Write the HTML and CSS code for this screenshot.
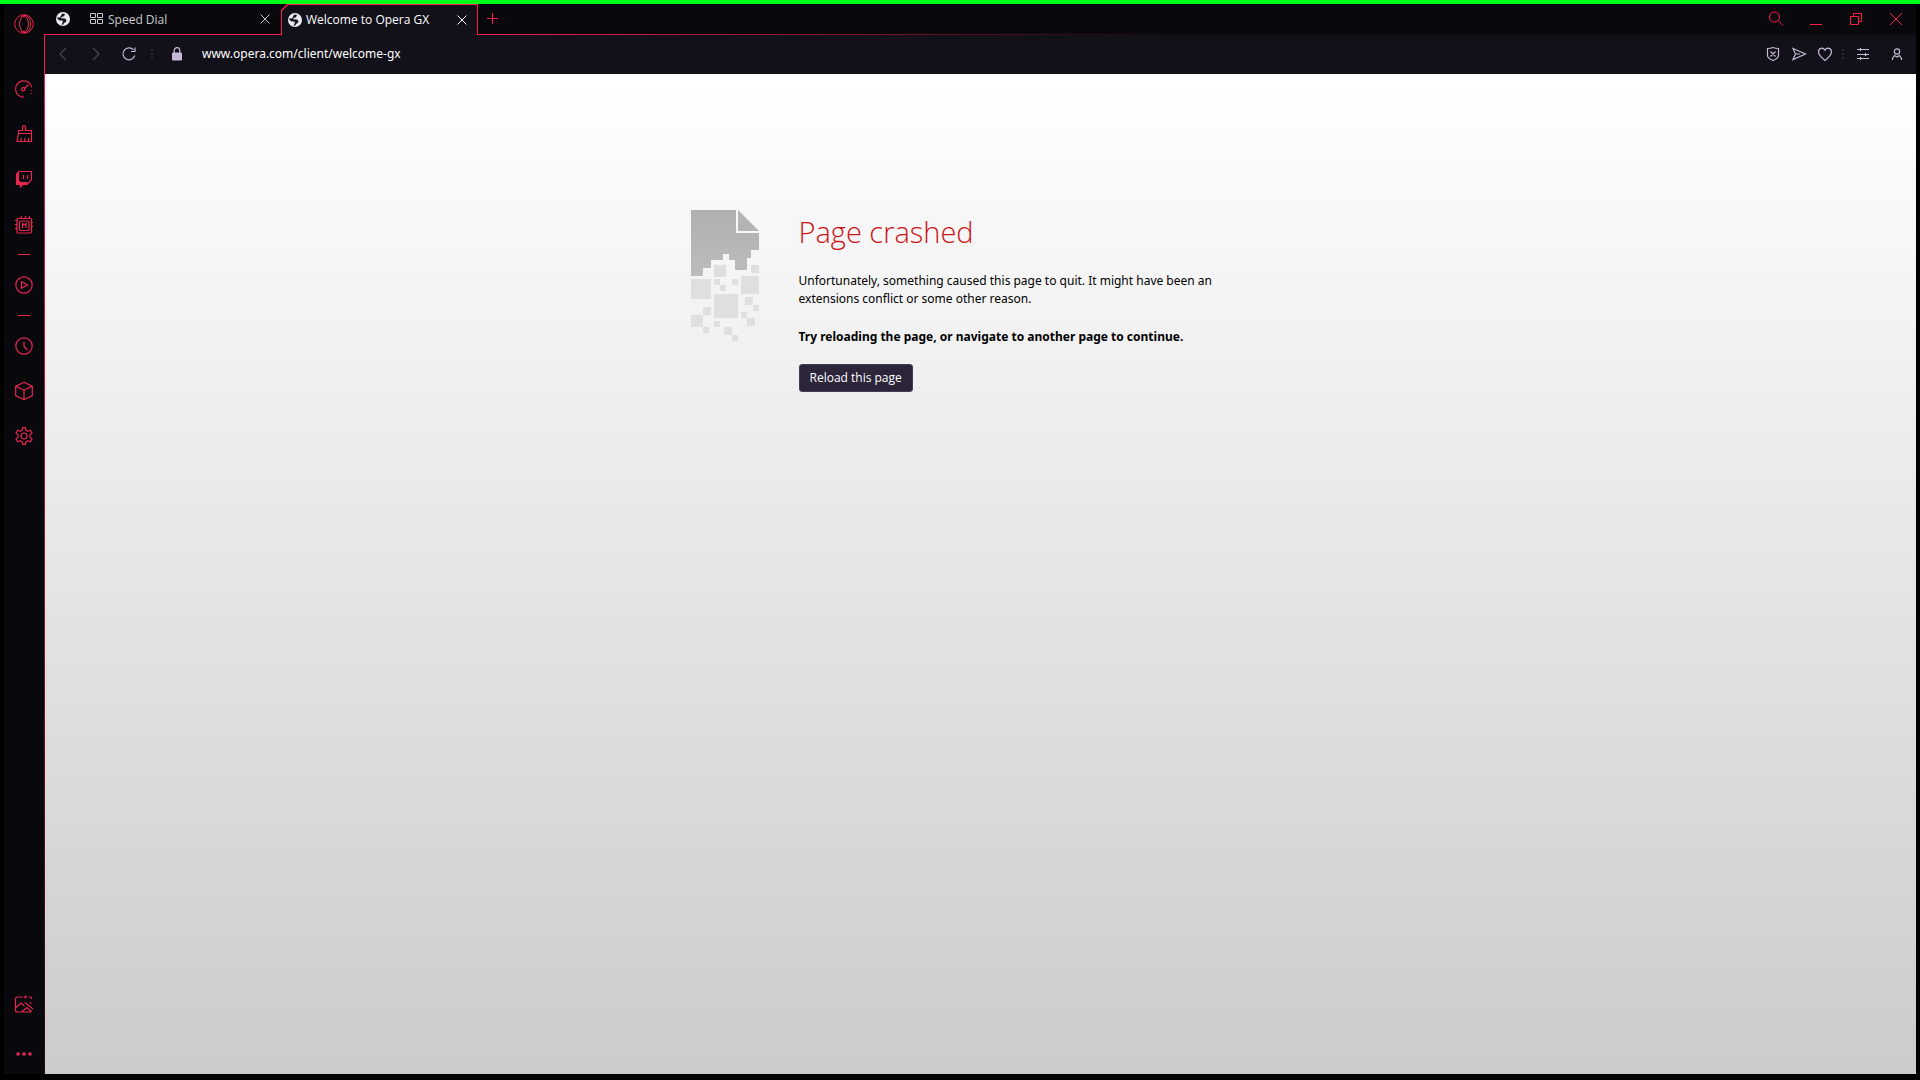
FILE: index.html
```
<!DOCTYPE html>
<html lang="en">
<head>
  <meta charset="UTF-8" />
  <meta name="viewport" content="width=device-width, initial-scale=1.0" />
  <title>Welcome to Opera GX</title>
  <link rel="stylesheet" href="styles.css">
</head>
<body>
  <svg class="sprite" aria-hidden="true">
    <symbol id="globe" viewBox="0 0 14 14">
      <circle cx="7" cy="7" r="7" fill="#e9e9f0" />
      <path d="M6.200 1.500L9 2 8 4.200 5.500 5 5.200 6.200 9 6.500 10.500 8 9.800 10 8 11 7.200 12.800 5.600 12.400 6.800 10 6.500 8.600 3.600 8.400 1.300 6.800 1.600 5.200 4 5.400z" fill="#16131c" />
    </symbol>
    <symbol id="close" viewBox="0 0 12 12">
      <path d="M1.500 1.500l9 9M10.500 1.500l-9 9" />
    </symbol>
  </svg>

  <div class="window">
    <nav class="sidebar" aria-label="Sidebar">
      <button class="side-btn logo" aria-label="Opera menu">
        <svg width="20" height="20" viewBox="0 0 20 20"><circle cx="10" cy="10" r="9.300" /><ellipse cx="10" cy="10" rx="4.500" ry="7.600" /><path d="M7 3.200C9 .8 13 .8 15 4c2 3.500 2 8.500 0 12-2 3.200-6 3.200-8 .8" /></svg>
      </button>
      <button class="side-btn" aria-label="GX Control">
        <svg width="20" height="20" viewBox="0 0 20 20"><path d="M10 18.200A8.200 8.200 0 1 1 17.800 8.500M17.700 11v1M17.200 14v1M10.500 9.500l4-4" /><circle cx="9.200" cy="10.300" r="1.600" /></svg>
      </button>
      <button class="side-btn" aria-label="GX Cleaner">
        <svg width="20" height="20" viewBox="0 0 20 20"><path d="M4.500 9.500V6.500h4V3a1.500 1.500 0 0 1 3 0v3.500h6v3zM4.500 9.500L3 17.500h14.500v-8M6.500 17.500l1-3.500M10.500 17.500l.5-3.500M14.500 17.500V14" /></svg>
      </button>
      <button class="side-btn" aria-label="Twitch">
        <svg width="20" height="20" viewBox="0 0 20 20"><path class="fill" d="M5 2L2 5v10.500h4V18l2.500-2.500H12L14 13H7L5 11.500z" /><path d="M5 2.500h12.500v8L13 15.500H9L6.500 18v-2.500h-4v-10zM9.500 6v4M13.500 6v4" /></svg>
      </button>
      <button class="side-btn" aria-label="Limiter">
        <svg width="20" height="20" viewBox="0 0 20 20"><rect x="3" y="4.500" width="14.500" height="14.500" rx="1" /><rect x="5.500" y="7" width="9.500" height="9.500" rx="1" /><path d="M8.500 14v-4.500l1.700 1.500L12 9.500V14M7.500 4V2M11.500 4V2M15.500 4V2M3 6.500H1M3 10.500H1M3 14.500H1M18 8.500h1M18 12.500h1" /></svg>
      </button>
      <span class="side-line"></span>
      <button class="side-btn" aria-label="Player">
        <svg width="20" height="20" viewBox="0 0 20 20"><circle cx="10" cy="10" r="8.200" /><path d="M7.500 6.700v6.600L13.700 10z" /></svg>
      </button>
      <span class="side-line"></span>
      <button class="side-btn" aria-label="History">
        <svg width="20" height="20" viewBox="0 0 20 20"><circle cx="10" cy="10" r="8.200" /><path d="M10 5.500v5l3.500 3.500" /></svg>
      </button>
      <button class="side-btn" aria-label="Extensions">
        <svg width="20" height="20" viewBox="0 0 20 20"><path d="M10 1.300l8.300 3.800v9.700L10 18.700l-8.300-3.900V5.100zM1.700 5.100L10 9.200l8.300-4.100M10 9.200v9.500" /></svg>
      </button>
      <button class="side-btn" aria-label="Settings">
        <svg width="20" height="20" viewBox="0 0 20 20"><path d="M8 4.500L8.500 1.700h3L12 4.500l1.500.9 2.700-1.200 1.800 2.800-2 1.900v2.200l2 1.900-1.800 2.800-2.700-1.200-1.500.9-.5 2.800h-3L8 15.500l-1.500-.9-2.700 1.200L2 13l2-1.900V8.900L2 7l1.800-2.800 2.700 1.200z" /><circle cx="10" cy="10" r="3" /></svg>
      </button>
      <span class="side-space"></span>
      <button class="side-btn" aria-label="Easy Setup">
        <svg width="20" height="20" viewBox="0 0 20 20"><path d="M9 3H3.500a2 2 0 0 0-2 2v11a2 2 0 0 0 2 2h12a2 2 0 0 0 2-1.500M14.500 3h2a1 1 0 0 1 1 1v1M11.500 1.500v3M10 3h3M2 13.500l5-4.500 3.500 3M8 17.500l5-4 4 4M11 8.500l8 6.500M16.500 8v2" /></svg>
      </button>
      <button class="side-btn more" aria-label="More">
        <svg width="20" height="20" viewBox="0 0 20 20"><g class="fill"><circle cx="4" cy="10" r="1.800" /><circle cx="10" cy="10" r="1.800" /><circle cx="16" cy="10" r="1.800" /></g></svg>
      </button>
    </nav>

    <div class="main">
      <header class="tabbar">
        <button class="workspace" aria-label="Workspace"><svg width="14" height="14"><use href="#globe" /></svg></button>
        <div class="tab">
          <svg class="dial" width="14" height="12" viewBox="0 0 14 12"><path d="M.5.5h5v4h-5zM7.500.5h5v4h-5zM.5 6.500h5v4h-5zM7.500 6.500h5v4h-5z" /></svg>
          <span class="tab-title">Speed Dial</span>
          <button class="tab-close" aria-label="Close tab"><svg width="12" height="12"><use href="#close" /></svg></button>
        </div>
        <div class="tab active">
          <svg width="14" height="14"><use href="#globe" /></svg>
          <span class="tab-title">Welcome to Opera GX</span>
          <button class="tab-close" aria-label="Close tab"><svg width="12" height="12"><use href="#close" /></svg></button>
        </div>
        <div class="tab-rest">
          <button class="new-tab" aria-label="New tab"><svg width="12" height="12" viewBox="0 0 12 12"><path d="M6.500 1v11M1 6.500h11" /></svg></button>
          <div class="controls">
            <button aria-label="Search tabs"><svg width="16" height="16" viewBox="0 0 16 16"><circle cx="6.500" cy="6" r="5" /><path d="M10 9.500l5 5" /></svg></button>
            <button aria-label="Minimize"><svg width="16" height="16" viewBox="0 0 16 16"><path d="M2 13.500h12" /></svg></button>
            <button aria-label="Restore"><svg width="16" height="16" viewBox="0 0 16 16"><path d="M2.500 5.500h8v8h-8zM5.500 5V2.500h8v8H11" /></svg></button>
            <button aria-label="Close window"><svg width="16" height="16" viewBox="0 0 16 16"><path d="M2 2l12 12M14 2L2 14" /></svg></button>
          </div>
        </div>
      </header>

      <div class="toolbar">
        <button class="nav-btn dim" aria-label="Back"><svg width="16" height="16" viewBox="0 0 16 16"><path d="M11 2L5 8l6 6" /></svg></button>
        <button class="nav-btn dim" aria-label="Forward"><svg width="16" height="16" viewBox="0 0 16 16"><path d="M5 2l6 6-6 6" /></svg></button>
        <button class="nav-btn reload" aria-label="Reload"><svg width="16" height="16" viewBox="0 0 16 16"><path d="M12.500 3.800A6 6 0 1 0 13.800 9.500M14 1.500v4h-4" /></svg></button>
        <span class="dots"></span>
        <svg class="lock" width="12" height="14" viewBox="0 0 12 14"><path d="M3.200 6V3.500a2.800 2.800 0 0 1 5.600 0V6" /><rect class="fill" x="1" y="5.500" width="10" height="8" rx="1" /></svg>
        <input class="url" type="text" aria-label="Address" value="www.opera.com/client/welcome-gx">
        <div class="actions">
          <button aria-label="Ad blocker"><svg width="16" height="16" viewBox="0 0 16 16"><path d="M8 1.500c2 .8 3.500 1 5.500 1v7c0 2.500-3 4-5.500 5-2.500-1-5.500-2.500-5.500-5v-7c2 0 3.500-.2 5.500-1zM5.500 5.500l5 5M10.500 5.500l-5 5" /></svg></button>
          <button aria-label="My Flow"><svg width="16" height="16" viewBox="0 0 16 16"><path d="M2 2.500L14.500 8 2 13.500 4.500 8zM4.500 8H9" /></svg></button>
          <button aria-label="Bookmark"><svg width="16" height="16" viewBox="0 0 16 16"><path d="M8 14.500C4.500 11.800 1.500 9.500 1.500 5.800 1.500 2.200 6 .8 8 4.200c2-3.400 6.500-2 6.500 1.600C14.500 9.500 11.500 11.800 8 14.500z" /></svg></button>
          <span class="dots"></span>
          <button class="setup" aria-label="Easy setup"><svg width="16" height="16" viewBox="0 0 16 16"><path d="M2 3.500h12M2 8.500h12M2 12.500h12M5.500 2v3M10.500 7v3M5.500 11v3" /></svg></button>
          <button class="profile" aria-label="Profile"><svg width="16" height="16" viewBox="0 0 16 16"><circle cx="8" cy="5.500" r="2.700" /><path d="M3.500 14V12.500l2-3L8 11l2.500-1.500 2 3V14" /></svg></button>
        </div>
      </div>

      <main class="page">
        <section class="crash">
          <svg class="crash-icon" width="68" height="132" viewBox="0 0 68 132">
            <defs>
              <linearGradient id="sheet" x1="0" y1="0" x2="0" y2="1">
                <stop offset="0" stop-color="#b0b0b0" />
                <stop offset="1" stop-color="#bcbcbc" />
              </linearGradient>
            </defs>
            <path fill="url(#sheet)" d="M0 0h45v23h23v17h-8v8h-4v12H44V50h-6v-6h-6v6H20v8h-8v8H0z" />
            <path fill="#b4b4b4" d="M47 0l21 21H47z" />
            <g class="bits">
              <rect x="23" y="55" width="12" height="12" />
              <rect x="60" y="55" width="8" height="8" />
              <rect x="0" y="69" width="20" height="20" />
              <rect x="23" y="69" width="6" height="6" />
              <rect x="29" y="75" width="6" height="6" />
              <rect x="41" y="69" width="6" height="6" />
              <rect x="50" y="66" width="18" height="18" />
              <rect x="23" y="84" width="24" height="24" />
              <rect x="54" y="87" width="8" height="8" />
              <rect x="62" y="95" width="6" height="6" />
              <rect x="12" y="97" width="8" height="8" />
              <rect x="50" y="102" width="6" height="6" />
              <rect x="56" y="108" width="8" height="8" />
              <rect x="0" y="105" width="12" height="12" />
              <rect x="12" y="117" width="6" height="6" />
              <rect x="23" y="111" width="6" height="6" />
              <rect x="33" y="117" width="8" height="8" />
              <rect x="41" y="125" width="6" height="6" />
            </g>
          </svg>
          <div class="crash-text">
            <h1>Page crashed</h1>
            <p>Unfortunately, something caused this page to quit. It might have been an extensions conflict or some other reason.</p>
            <p><strong>Try reloading the page, or navigate to another page to continue.</strong></p>
            <button class="reload-page">Reload this page</button>
          </div>
        </section>
      </main>
    </div>
  </div>
</body>
</html>
```

FILE: styles.css
```
:root {
  --red: #fa1e4e;
  --side-red: #e8264f;
  --frame: #09080d;
  --bar: #121019;
  --icon: #c5b9d6;
}

* {
  box-sizing: border-box;
}

body {
  margin: 0;
  min-height: 100vh;
  display: flex;
  padding: 0 4px 6px;
  border-top: 4px solid #00ff1a;
  background: #000;
  font-family: "Noto Sans", "Open Sans", sans-serif;
  font-size: 12px;
}

button {
  display: flex;
  align-items: center;
  justify-content: center;
  padding: 0;
  border: 0;
  background: none;
  color: inherit;
  font: inherit;
  cursor: pointer;
}

svg {
  flex: none;
  fill: none;
  stroke: currentColor;
}
.fill {
  fill: currentColor;
  stroke: none;
}
.sprite {
  display: none;
}
#globe,
.crash-icon {
  stroke: none;
}

.window {
  flex: 1;
  display: flex;
  background: var(--frame);
}

/* sidebar */
.sidebar {
  width: 39px;
  margin-right: 1px;
  display: flex;
  flex-direction: column;
  color: var(--side-red);
}
.sidebar svg {
  stroke-width: 1.2;
}
.side-btn {
  height: 45px;
  width: 100%;
}
.side-btn.logo {
  height: 40px;
  margin-bottom: 22px;
}
.side-btn.logo svg {
  stroke-width: 1;
}
.side-btn.more {
  height: 40px;
  margin-top: 8px;
}
.side-line {
  height: 16px;
  display: flex;
  align-items: center;
  justify-content: center;
}
.side-line::before {
  content: "";
  width: 12px;
  height: 1px;
  background: currentColor;
}
.side-space {
  flex: 1;
}

.main {
  flex: 1;
  display: flex;
  flex-direction: column;
  min-width: 0;
}

/* tabs */
.tabbar {
  display: flex;
  height: 31px;
  color: #c8c8cc;
  font-family: "Open Sans", "Noto Sans", sans-serif;
}
.workspace,
.tab {
  border-bottom: 1px solid var(--red);
}
.workspace {
  width: 38px;
}
.tab {
  display: flex;
  align-items: center;
  gap: 4px;
  width: 199px;
  padding: 0 10px 0 8px;
}
.tab-title {
  flex: 1;
  white-space: nowrap;
}
.tab.active {
  position: relative;
  z-index: 0;
  width: 197px;
  padding: 0 10px 0 7px;
  border: 0;
  background: var(--red);
  color: #fff;
  clip-path: polygon(6px 0, 100% 0, 100% 100%, 0 100%, 0 6px);
}
.tab.active::before {
  content: "";
  position: absolute;
  z-index: -1;
  inset: 1px 1px 0;
  background: var(--bar);
  clip-path: polygon(6px 0, 100% 0, 100% 100%, 0 100%, 0 6px);
}
.tab-rest {
  flex: 1;
  display: flex;
  justify-content: space-between;
  padding-bottom: 1px;
  color: var(--red);
  background: linear-gradient(90deg, var(--red), transparent 720px) bottom / 100% 1px no-repeat;
}
.new-tab {
  width: 28px;
  height: 28px;
}
.controls {
  display: flex;
}
.controls button {
  width: 40px;
}

/* address bar */
.toolbar {
  display: flex;
  align-items: center;
  height: 39px;
  padding: 0 0 2px 1px;
  border-left: 1px solid var(--red);
  background: var(--bar);
  color: var(--icon);
}
.toolbar svg {
  stroke-width: 1.2;
}
.nav-btn {
  width: 33px;
  height: 32px;
}
.dim {
  color: #4a4556;
}
.dots {
  width: 2px;
  height: 10px;
  margin: 0 6px;
  background: repeating-linear-gradient(#2c2937 0 2px, transparent 2px 4px);
}
.lock {
  margin: 0 19px 0 12px;
}
.url {
  flex: 1;
  min-width: 0;
  padding: 0;
  border: 0;
  outline: 0;
  background: none;
  color: #fff;
  font: inherit;
}
.actions {
  display: flex;
  align-items: center;
}
.actions button {
  width: 26px;
  height: 32px;
}
.actions .dots {
  margin: 0 4px;
}
.actions .setup {
  width: 30px;
}
.actions .profile {
  width: 38px;
}

/* crashed page */
.page {
  flex: 1;
  border-left: 1px solid var(--red);
  border-image: linear-gradient(var(--red), #2a0a18) 1;
  border-width: 0 0 0 1px;
  background: linear-gradient(#fff, #cbcbcb);
}
.crash {
  display: flex;
  gap: 40px;
  max-width: 580px;
  margin: 0 auto;
  padding-top: 136px;
}
.bits {
  fill: #dfdfdf;
}
.crash-text {
  flex: 1;
  line-height: 18px;
  color: #000;
}
.crash-text h1 {
  margin: 0 0 18px;
  font-family: "Open Sans", "Noto Sans", sans-serif;
  font-size: 29px;
  font-weight: 300;
  line-height: 44px;
  color: #cc1518;
}
.crash-text p {
  margin: 0 0 20px;
}
.crash-text .reload-page {
  margin-top: -2px;
}
.reload-page {
  height: 28px;
  padding: 0 10px;
  border: 1px solid #453c5c;
  border-radius: 3px;
  background: #2d263b;
  color: #fff;
  font-family: "Open Sans", "Noto Sans", sans-serif;
}
```
